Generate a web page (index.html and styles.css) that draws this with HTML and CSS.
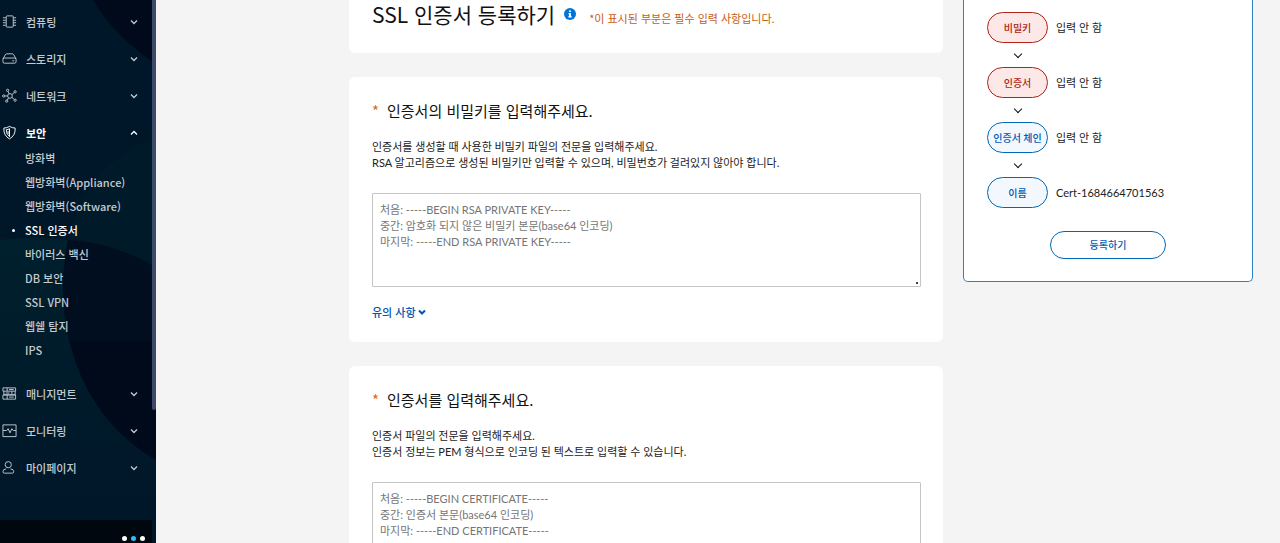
FILE: index.html
```
<!DOCTYPE html>
<html lang="ko">
<head>
	<meta charset="UTF-8">
	<meta name="viewport" content="width=device-width, initial-scale=1">
	<title>SSL 인증서 등록하기</title>
	<link rel="stylesheet" href="styles.css">
</head>
<body>
	<nav class="sidebar">
		<svg class="sidebar-bg" viewBox="0 0 156 543" preserveAspectRatio="none" aria-hidden="true">
			<path d="M93 0Q115 37 156 64V0z" fill="#000a1a"/>
			<path d="M68 240Q82 175 140 144L156 138V268Q115 243 68 240z" fill="#001a29"/>
			<path d="M0 240Q34 235 68 240Q55 305 75 360Q97 425 156 460V500H0z" fill="url(#teal)"/>
			<path d="M68 240Q115 243 156 267V460Q97 425 75 360Q55 305 68 240z" fill="#000e20"/>
			<path d="M70 341H156V460Q97 425 75 360z" fill="#000a1a"/>
			<defs>
				<linearGradient id="teal" x1="0" y1="0" x2="0" y2="1">
					<stop offset="0" stop-color="#00202d"/>
					<stop offset="1" stop-color="#001729"/>
				</linearGradient>
			</defs>
		</svg>
		<ul class="menu">
			<li>
				<button type="button" class="menu-btn">
					<svg class="icon" viewBox="0 0 16 16"><rect x="4.500" y="2" width="7.500" height="12" rx="1"/><path d="M1 4h3M1 6.700h3M1 9.300h3M1 12h3M12 4h3M12 6.700h3M12 9.300h3M12 12h3"/></svg>
					<span>컴퓨팅</span>
					<svg class="arrow" viewBox="0 0 8 8"><path d="M1 2.500l3 3 3-3"/></svg>
				</button>
			</li>
			<li>
				<button type="button" class="menu-btn">
					<svg class="icon" viewBox="0 0 16 16"><path d="M1 8.500L3.500 4Q4 3 5 3h6q1 0 1.500 1L15 8.500M2.500 7.500h11Q15 7.500 15 9v2.500q0 1.500-1.500 1.500h-11Q1 13 1 11.500V9q0-1.500 1.500-1.500zM11 10.500h2"/></svg>
					<span>스토리지</span>
					<svg class="arrow" viewBox="0 0 8 8"><path d="M1 2.500l3 3 3-3"/></svg>
				</button>
			</li>
			<li>
				<button type="button" class="menu-btn">
					<svg class="icon" viewBox="0 0 16 16"><circle cx="8.500" cy="8.500" r="2.500"/><circle cx="1.800" cy="8.500" r="1.200"/><circle cx="6" cy="2.500" r="1.200"/><circle cx="14" cy="4" r="1.200"/><circle cx="14" cy="13" r="1.200"/><circle cx="5" cy="14" r="1.200"/><path d="M3 8.500h3M6.400 3.600l1.200 2.600M10.600 7l2.400-2M10.500 10l2.500 2.200M7 10.500L5.600 13"/></svg>
					<span>네트워크</span>
					<svg class="arrow" viewBox="0 0 8 8"><path d="M1 2.500l3 3 3-3"/></svg>
				</button>
			</li>
			<li class="open">
				<button type="button" class="menu-btn" aria-expanded="true">
					<svg class="icon" viewBox="0 0 16 16"><path d="M8 1.500Q5 3.300 2 3.200Q1.300 11 8 14.800Q14.700 11 14 3.200Q11 3.300 8 1.500z"/><path d="M8 4Q6.500 5 4.500 5Q4.300 9.500 8 12.300zM8 4v8.300"/><path d="M6.500 6.500v3"/></svg>
					<span>보안</span>
					<svg class="arrow" viewBox="0 0 8 8"><path d="M1 5.500l3-3 3 3"/></svg>
				</button>
				<ul class="submenu">
					<li><a href="#">방화벽</a></li>
					<li><a href="#">웹방화벽(Appliance)</a></li>
					<li><a href="#">웹방화벽(Software)</a></li>
					<li><a href="#" class="active">SSL 인증서</a></li>
					<li><a href="#">바이러스 백신</a></li>
					<li><a href="#">DB 보안</a></li>
					<li><a href="#">SSL VPN</a></li>
					<li><a href="#">웹쉘 탐지</a></li>
					<li><a href="#">IPS</a></li>
				</ul>
			</li>
			<li>
				<button type="button" class="menu-btn">
					<svg class="icon" viewBox="0 0 16 16"><path d="M1 2h13.500v3.500H1zM2 5.500v4h12v-4M1 9.500h13.500V14H1zM5.500 2v3.500M10.500 5.500v4M5.500 9.500V14M7.500 3.700h5M7.500 11.800h5M4 7.500h4"/></svg>
					<span>매니지먼트</span>
					<svg class="arrow" viewBox="0 0 8 8"><path d="M1 2.500l3 3 3-3"/></svg>
				</button>
			</li>
			<li>
				<button type="button" class="menu-btn">
					<svg class="icon" viewBox="0 0 16 16"><path d="M1 2h14v12.500H1zM1 8h4l1.500-2 2 4.500L10.500 6 12 8h3"/></svg>
					<span>모니터링</span>
					<svg class="arrow" viewBox="0 0 8 8"><path d="M1 2.500l3 3 3-3"/></svg>
				</button>
			</li>
			<li>
				<button type="button" class="menu-btn">
					<svg class="icon" viewBox="0 0 16 16"><circle cx="6.700" cy="5" r="3.300"/><path d="M4.500 9.500Q1 9.500 1 12.500Q1 14 2.500 14h8.500Q12.500 14 12.500 12.500Q12.500 9.500 9 9.500"/></svg>
					<span>마이페이지</span>
					<svg class="arrow" viewBox="0 0 8 8"><path d="M1 2.500l3 3 3-3"/></svg>
				</button>
			</li>
		</ul>
		<div class="sidebar-foot"><i></i><i class="on"></i><i></i></div>
		<div class="thumb"></div>
	</nav>

	<main class="content">
		<form class="cards" id="cert">
			<header class="card card-top">
				<h1>SSL 인증서 등록하기</h1>
				<svg class="info" viewBox="0 0 12 12" role="img" aria-label="도움말"><circle cx="6" cy="6" r="6"/><path d="M5 2.500h2v1.600H5zM4.500 5H7v3.200h.7v1.200H4.300V8.200H5v-2h-.5z"/></svg>
				<p>*이 표시된 부분은 필수 입력 사항입니다.</p>
			</header>
			<section class="card">
				<h2><span class="req">*</span><label for="key">인증서의 비밀키를 입력해주세요.</label></h2>
				<p class="desc">인증서를 생성할 때 사용한 비밀키 파일의 전문을 입력해주세요.<br>RSA 알고리즘으로 생성된 비밀키만 입력할 수 있으며, 비밀번호가 걸려있지 않아야 합니다.</p>
				<textarea id="key" placeholder="처음: -----BEGIN RSA PRIVATE KEY-----&#10;중간: 암호화 되지 않은 비밀키 본문(base64 인코딩)&#10;마지막: -----END RSA PRIVATE KEY-----"></textarea>
				<button type="button" class="more">유의 사항<svg class="arrow" viewBox="0 0 8 8"><path d="M1 2.500l3 3 3-3"/></svg></button>
			</section>
			<section class="card">
				<h2><span class="req">*</span><label for="crt">인증서를 입력해주세요.</label></h2>
				<p class="desc">인증서 파일의 전문을 입력해주세요.<br>인증서 정보는 PEM 형식으로 인코딩 된 텍스트로 입력할 수 있습니다.</p>
				<textarea id="crt" placeholder="처음: -----BEGIN CERTIFICATE-----&#10;중간: 인증서 본문(base64 인코딩)&#10;마지막: -----END CERTIFICATE-----"></textarea>
			</section>
		</form>

		<aside class="summary">
			<ol class="steps">
				<li><span class="pill need">비밀키</span>입력 안 함</li>
				<li><span class="pill need">인증서</span>입력 안 함</li>
				<li><span class="pill">인증서 체인</span>입력 안 함</li>
				<li><span class="pill">이름</span>Cert-1684664701563</li>
			</ol>
			<button type="submit" form="cert" class="submit">등록하기</button>
		</aside>
	</main>
</body>
</html>
```
FILE: styles.css
```
*{box-sizing: border-box;}
body,h1,h2,p,ul,ol{margin: 0;padding: 0;}
ul,ol{list-style: none;}
body{display: flex;height: 100vh;overflow: hidden;background: #f4f4f4;color: #222;font: 11px/16px "Noto Sans CJK KR",sans-serif;}
button,textarea{font: inherit;color: inherit;}
button{padding: 0;border: 0;background: none;cursor: pointer;}
a{color: inherit;text-decoration: none;}
svg{flex: none;fill: none;stroke: currentColor;}

/* sidebar */
.sidebar{position: relative;flex: none;display: flex;flex-direction: column;width: 156px;background: #001729;color: #c3cad0;font-weight: 500;}
.sidebar-bg{position: absolute;top: 0;left: 0;width: 100%;height: 100%;stroke: none;}
.menu{position: relative;flex: 1;display: flex;flex-direction: column;gap: 12px;padding-top: 9px;}
.menu-btn{display: flex;align-items: center;width: 100%;height: 25px;padding: 0 18px 0 2px;text-align: left;}
.menu-btn span{flex: 1;margin-left: 9px;}
.icon{width: 15px;height: 15px;}
.arrow{width: 8px;height: 8px;stroke-width: 1.3;}
.open .menu-btn{color: #fff;font-weight: 700;}
.submenu{padding: 1px 0 7px;}
.submenu a{display: flex;align-items: center;height: 24px;padding-left: 25px;}
.submenu .active{padding-left: 12px;color: #fff;}
.submenu .active:before{content: "";width: 3px;height: 3px;margin-right: 10px;border-radius: 50%;background: #fff;}
.sidebar-foot{position: relative;display: flex;justify-content: flex-end;gap: 4px;height: 23px;margin-right: 4px;padding: 16px 7px 0 0;background: #00070f;}
.sidebar-foot i{width: 5px;height: 5px;border-radius: 50%;background: #fff;}
.sidebar-foot .on{background: #2bc0f5;}
.thumb{position: absolute;top: 0;right: 0;width: 4px;height: 410px;border-radius: 0 0 2px 2px;background: #3d4a69;}

/* content */
.content{flex: 1;display: flex;align-items: flex-start;gap: 20px;min-width: 0;padding: 0 27px 0 193px;}
.cards{flex: 1;display: flex;flex-direction: column;gap: 24px;min-width: 0;}
.card{padding: 23px 22px 22px 23px;border-radius: 6px;background: #fff;}
.card-top{display: flex;align-items: center;padding-top: 0;padding-bottom: 25px;border-radius: 0 0 6px 6px;}
h1{font-size: 21px;line-height: 28px;font-weight: 400;color: #111;}
.info{width: 12px;height: 12px;margin: 0 13px 0 9px;fill: #0074d9;stroke: none;}
.info path{fill: #fff;}
.card-top p{padding-top: 8px;color: #c95c12;}
h2{display: flex;font-size: 15px;line-height: 22px;font-weight: 400;color: #111;}
.req{width: 15px;color: #dd6b10;}
.desc{margin: 17px 0 22px;}
.desc,textarea,.steps{font-family: Lato,"Noto Sans CJK KR",sans-serif;}
textarea{display: block;width: 100%;height: 94px;padding: 8px 7px;border: 1px solid #c4c4c4;border-radius: 1px;background: #fff;}
textarea::placeholder{color: #757575;}
textarea::-webkit-resizer{background: radial-gradient(circle at 12px 12px,#444 1px,transparent 1px);}
.more{display: flex;align-items: center;gap: 2px;margin-top: 17px;color: #0056b3;font-weight: 500;}
.more .arrow{stroke-width: 2;}

/* summary */
.summary{flex: none;width: 290px;padding: 12px 23px 22px;border: 1px solid #2f80c3;border-top: 0;border-radius: 0 0 5px 5px;background: #fff;}
.steps{display: flex;flex-direction: column;gap: 24px;}
.steps li{position: relative;display: flex;align-items: center;gap: 8px;}
.steps li + li:before{content: "";position: absolute;top: -16px;left: 28px;width: 5px;height: 5px;border: solid #111;border-width: 0 1px 1px 0;transform: rotate(45deg);}
.pill{display: flex;align-items: center;justify-content: center;width: 61px;height: 31px;border: 1px solid #0068b7;border-radius: 16px;background: #f3f8fe;color: #0058b5;font-size: 10px;font-weight: 500;}
.need{border-color: #b02318;background: #fce9e7;color: #b01c14;}
.submit{display: block;width: 116px;height: 28px;margin: 23px auto 0;border: 1px solid #0068b7;border-radius: 14px;color: #0058b5;font-size: 10px;font-weight: 500;}
```
